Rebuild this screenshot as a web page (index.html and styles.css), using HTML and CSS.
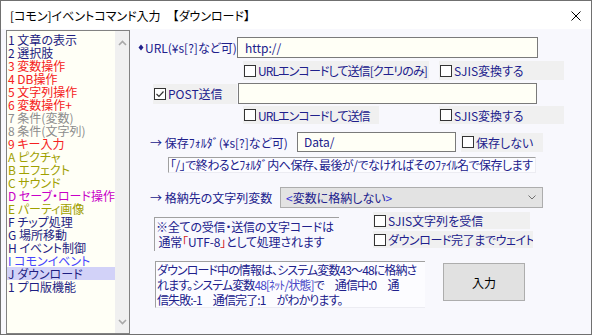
FILE: index.html
```html
<!DOCTYPE html>
<html lang="ja">
<head>
    <meta charset="UTF-8">
    <title>[コモン]イベントコマンド入力</title>
    <link rel="stylesheet" href="styles.css">
</head>
<body>
    <div class="window">
        <header class="titlebar">
            <span class="title">[コモン]イベントコマンド入力　【ダウンロード】</span>
            <svg class="close" width="10" height="10" viewBox="0 0 10 10">
                <path d="M0.5 0.5 L9.5 9.5 M9.5 0.5 L0.5 9.5" stroke="#000" stroke-width="1" fill="none"/>
            </svg>
        </header>

        <div class="dialog">
            <div class="cmd-list">
                <ul class="cmd-items">
                    <li class="c-navy">1 文章の表示</li>
                    <li class="c-navy">2 選択肢</li>
                    <li class="c-red">3 変数操作</li>
                    <li class="c-red">4 DB操作</li>
                    <li class="c-red">5 文字列操作</li>
                    <li class="c-red">6 変数操作+</li>
                    <li class="c-gray">7 条件(変数)</li>
                    <li class="c-gray">8 条件(文字列)</li>
                    <li class="c-red">9 キー入力</li>
                    <li class="c-olive">A ピクチャ</li>
                    <li class="c-olive">B エフェクト</li>
                    <li class="c-olive">C サウンド</li>
                    <li class="c-magenta">D セーブ・ロード操作</li>
                    <li class="c-olive">E パーティ画像</li>
                    <li class="c-navy">F チップ処理</li>
                    <li class="c-navy">G 場所移動</li>
                    <li class="c-navy">H イベント制御</li>
                    <li class="c-blue">I コモンイベント</li>
                    <li class="c-navy selected">J ダウンロード</li>
                    <li class="c-navy">1 プロ版機能</li>
                </ul>
                <div class="scrollbar">
                    <svg width="9" height="6" viewBox="0 0 9 6">
                        <path d="M1 5 L4.5 1.5 L8 5" stroke="#a8a8a8" stroke-width="1.6" fill="none"/>
                    </svg>
                    <svg width="9" height="6" viewBox="0 0 9 6">
                        <path d="M1 1 L4.5 4.5 L8 1" stroke="#a8a8a8" stroke-width="1.6" fill="none"/>
                    </svg>
                </div>
            </div>

            <main class="form">
                <div class="row row-url">
                    <span class="label url-label">
                        <svg class="diamond" width="6" height="7" viewBox="0 0 6 7"><path d="M3 0.5 L5.5 3.5 L3 6.5 L0.5 3.5 Z" fill="#20208c"/></svg>URL(¥s[?]など可)
                    </span>
                    <div class="field url-field">http://</div>
                </div>

                <div class="row row-opts1">
                    <label class="chk chk-query"><span class="box"></span>URLエンコードして送信[クエリのみ]</label>
                    <label class="chk chk-sjis"><span class="box"></span>SJIS変換する</label>
                </div>

                <div class="row row-post">
                    <label class="chk chk-post">
                        <span class="box">
                            <svg width="10" height="10" viewBox="0 0 10 10"><path d="M1.5 5 L4 7.5 L8.5 2.5" stroke="#333" stroke-width="1.2" fill="none"/></svg>
                        </span>POST送信
                    </label>
                    <div class="field post-field"></div>
                </div>

                <div class="row row-opts2">
                    <label class="chk chk-encode"><span class="box"></span>URLエンコードして送信</label>
                    <label class="chk chk-sjis2"><span class="box"></span>SJIS変換する</label>
                </div>

                <div class="row row-folder">
                    <span class="label folder-label">→ 保存ﾌｫﾙﾀﾞ(¥s[?]など可)</span>
                    <div class="field folder-field">Data/</div>
                    <label class="chk chk-nosave"><span class="box"></span>保存しない</label>
                </div>

                <div class="row row-hint">
                    <div class="note hint">「/」で終わるとﾌｫﾙﾀﾞ内へ保存、最後が/でなければそのﾌｧｲﾙ名で保存します</div>
                </div>

                <div class="row row-var">
                    <span class="label var-label">→ 格納先の文字列変数</span>
                    <div class="select">
                        <span><span class="bracket">&lt;</span>変数に格納しない<span class="bracket">&gt;</span></span>
                        <svg width="8" height="5" viewBox="0 0 8 5"><path d="M0.5 0.5 L4 4 L7.5 0.5" stroke="#707070" stroke-width="1" fill="none"/></svg>
                    </div>
                </div>

                <div class="row row-charset">
                    <div class="note charset">
                        ※全ての受信・送信の文字コードは<br>
                        &nbsp;通常<span class="red">「</span>UTF-8<span class="red">」</span>として処理されます
                    </div>
                    <div class="chk-col">
                        <label class="chk chk-recv"><span class="box"></span>SJIS文字列を受信</label>
                        <label class="chk chk-wait"><span class="box"></span>ダウンロード完了までウェイト</label>
                    </div>
                </div>

                <div class="row row-info">
                    <div class="note info">
                        <div>ダウンロード中の情報は、システム変数43～48に格納さ</div>
                        <div>れます。システム変数<span class="hl">48[ﾈｯﾄ/状態]</span>で　通信中:0　通</div>
                        <div>信失敗:-1　通信完了:1　がわかります。</div>
                    </div>
                    <button class="ok-button">入力</button>
                </div>
            </main>
        </div>
    </div>
</body>
</html>
```

FILE: styles.css
```css
body {
    margin: 0;
    font-family: "Noto Sans CJK JP", "Liberation Sans", sans-serif;
    font-size: 12px;
    font-feature-settings: "palt";
    color: #20208c;
}

.window {
    width: 592px;
    height: 335px;
    box-sizing: border-box;
    border: 1px solid #707070;
    background-color: #f8f8fd;
    display: flex;
    flex-direction: column;
}

/* title bar */
.titlebar {
    height: 28px;
    flex-shrink: 0;
    background-color: #fff;
    display: flex;
    align-items: center;
    justify-content: space-between;
    padding: 0 10px 0 9px;
}

.title {
    color: #000;
    font-size: 12px;
    word-spacing: 4px;
}

.close {
    margin-top: 1px;
}

.dialog {
    flex: 1;
    display: flex;
    min-height: 0;
}

/* command list */
.cmd-list {
    width: 124px;
    margin: 1px 0 0 5px;
    box-sizing: border-box;
    border: 1px solid #828282;
    background-color: #fffff6;
    display: flex;
}

.cmd-items {
    flex: 1;
    list-style: none;
    margin: 0;
    padding: 2px 0 0 0;
}

.cmd-items li {
    height: 13px;
    line-height: 13px;
    padding-left: 1px;
    white-space: nowrap;
}

.cmd-items li.selected {
    background-color: #d2d2f8;
}

.c-navy { color: #1e1e82; }
.c-red { color: #f52020; }
.c-gray { color: #8c8c8c; }
.c-olive { color: #a0a000; }
.c-magenta { color: #c800c8; }
.c-blue { color: #4646ff; }

.scrollbar {
    width: 17px;
    background-color: #f0f0f0;
    display: flex;
    flex-direction: column;
    justify-content: space-between;
    align-items: center;
    padding: 9px 0 8px;
}

/* form */
.form {
    flex: 1;
}

.row {
    display: flex;
    align-items: center;
}

.label {
    white-space: nowrap;
}

.field {
    box-sizing: border-box;
    height: 21px;
    line-height: 19px;
    border: 1px solid #7a7a7a;
    background-color: #fffff6;
    color: #20208c;
    padding-left: 7px;
}

.chk {
    box-sizing: border-box;
    height: 19px;
    background-color: #f0f0f0;
    display: flex;
    align-items: center;
    padding-left: 1px;
    white-space: nowrap;
    overflow: hidden;
    color: #20208c;
}

.chk .box {
    width: 12px;
    height: 12px;
    box-sizing: border-box;
    border: 1px solid #333;
    background-color: #fff;
    margin-right: 2px;
    display: flex;
    align-items: center;
    justify-content: center;
    flex-shrink: 0;
}

.row-url {
    margin-top: 8px;
}

.url-label {
    margin-left: 8px;
    width: 99px;
    display: flex;
    align-items: center;
}

.diamond {
    margin-right: 1px;
}

.url-field {
    width: 301px;
}

.row-opts1 {
    margin-top: 3px;
}

.chk-query {
    margin-left: 113px;
    width: 186px;
    letter-spacing: -0.9px;
}

.chk-sjis {
    margin-left: 10px;
    width: 125px;
}

.row-post {
    margin-top: 3px;
}

.chk-post {
    margin-left: 23px;
    width: 84px;
    height: 20px;
}

.post-field {
    margin-left: 1px;
    width: 299px;
}

.row-opts2 {
    margin-top: 2px;
}

.chk-encode {
    margin-left: 113px;
    width: 136px;
    height: 18px;
    letter-spacing: -0.9px;
}

.chk-sjis2 {
    margin-left: 60px;
    width: 125px;
    height: 18px;
}

.row-folder {
    margin-top: 8px;
}

.folder-label {
    margin-left: 20px;
    width: 147px;
}

.folder-field {
    width: 159px;
    height: 20px;
    line-height: 18px;
    padding-left: 6px;
}

.chk-nosave {
    margin-left: 5px;
    width: 82px;
}

.note {
    box-sizing: border-box;
    background-color: #fcfcff;
    border-top: 1px solid #a0a0a0;
    border-left: 1px solid #a0a0a0;
    border-right: 1px solid #ececf2;
    border-bottom: 1px solid #ececf2;
    white-space: nowrap;
    overflow: hidden;
    letter-spacing: -0.5px;
}

.row-hint {
    margin-top: 5px;
}

.hint {
    margin-left: 38px;
    width: 368px;
    height: 16px;
    line-height: 14px;
    padding-left: 1px;
}

.row-var {
    margin-top: 14px;
}

.var-label {
    margin-left: 20px;
    width: 130px;
}

.select {
    box-sizing: border-box;
    width: 263px;
    height: 21px;
    background-color: #e3e3e3;
    border: 1px solid #adadad;
    display: flex;
    align-items: center;
    justify-content: space-between;
    padding: 0 6px 0 5px;
}

.bracket {
    color: #3434d8;
}

.row-charset {
    align-items: flex-start;
    margin-top: 4px;
}

.charset {
    margin: 5px 0 0 24px;
    width: 185px;
    height: 34px;
    line-height: 15px;
    padding: 1px 0 0 1px;
    border-right: none;
    border-bottom: none;
    background-color: transparent;
    letter-spacing: -0.2px;
}

.red {
    color: #d02020;
}

.chk-col {
    margin-left: 34px;
    display: flex;
    flex-direction: column;
    gap: 2px;
}

.chk-recv {
    width: 157px;
    height: 17px;
}

.chk-wait {
    width: 160px;
    height: 17px;
    letter-spacing: -0.4px;
}

.row-info {
    align-items: flex-start;
    margin-top: 10px;
}

.info {
    margin-left: 25px;
    width: 270px;
    height: 47px;
    line-height: 15px;
    padding: 0 0 0 1px;
    border-right: none;
    letter-spacing: -0.9px;
}

.hl {
    color: #4848c8;
}

.ok-button {
    margin: 2px 0 0 18px;
    width: 82px;
    height: 38px;
    background-color: #e1e1e1;
    border: 1px solid #adadad;
    font-family: "Noto Sans CJK JP", sans-serif;
    font-size: 12px;
    color: #000;
    padding: 0;
}
```
